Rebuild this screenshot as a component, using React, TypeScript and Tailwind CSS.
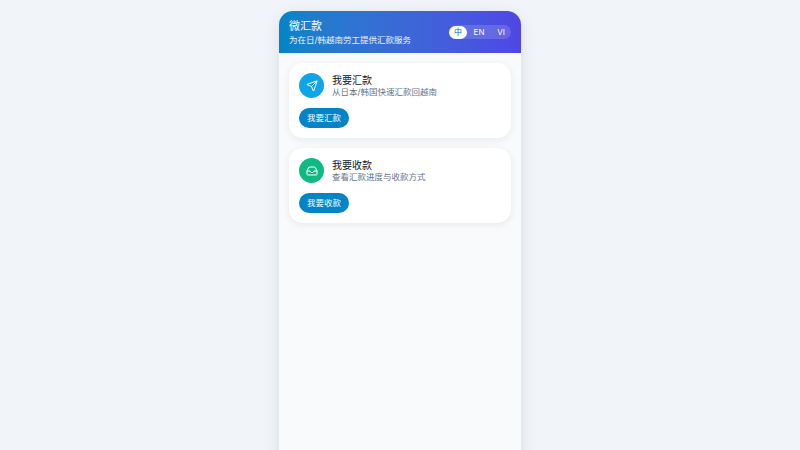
import { Send, Inbox } from "lucide-react";
import React from "react";

type ActionCardProps = {
	icon: React.ReactNode;
	iconColor: string;
	title: string;
	subtitle: string;
	button: string;
};

function ActionCard({ icon, iconColor, title, subtitle, button }: ActionCardProps) {
	return (
		<div className="rounded-[14px] bg-white p-[10px] shadow-[0_2px_8px_rgba(15,23,42,0.07)]">
			<div className="flex items-center gap-2">
				<div className={`flex h-[25px] w-[25px] items-center justify-center rounded-full text-white ${iconColor}`}>
					{icon}
				</div>
				<div>
					<div className="text-[10px] leading-[13px] text-[#0f172a]">{title}</div>
					<div className="text-[8.5px] leading-[11px] text-[#64748b]">{subtitle}</div>
				</div>
			</div>
			<button className="mt-[10px] block h-[20px] w-[50px] rounded-full bg-[#0284c7] text-[8.5px] text-white">
				{button}
			</button>
		</div>
	);
}

export default function App() {
	return (
		<div className="flex h-[450px] justify-center overflow-hidden bg-[#f1f5f9] font-['Inter','Noto_Sans_CJK_SC',sans-serif]">
			<div className="mt-[11px] h-[460px] w-[242px] overflow-hidden rounded-t-[14px] bg-[#f8fafc] shadow-[0_4px_16px_rgba(15,23,42,0.1)]">
				<div className="flex h-[42px] items-center justify-between bg-gradient-to-r from-[#0284c7] to-[#4f46e5] px-[10px] text-white">
					<div>
						<div className="text-[11px] leading-[15px]">微汇款</div>
						<div className="text-[8.5px] leading-[12px] text-white/90">为在日/韩越南劳工提供汇款服务</div>
					</div>
					<div className="flex h-[14px] items-center rounded-full bg-white/15 text-[8px]">
						<span className="flex h-[13px] w-[18px] items-center justify-center rounded-full bg-white text-[#0369a1]">中</span>
						<span className="flex w-[24px] justify-center">EN</span>
						<span className="flex w-[20px] justify-center">VI</span>
					</div>
				</div>
				<div className="flex flex-col gap-[10px] p-[10px]">
					<ActionCard
						icon={<Send size={12} />}
						iconColor="bg-[#0ea5e9]"
						title="我要汇款"
						subtitle="从日本/韩国快速汇款回越南"
						button="我要汇款"
					/>
					<ActionCard
						icon={<Inbox size={12} />}
						iconColor="bg-[#10b981]"
						title="我要收款"
						subtitle="查看汇款进度与收款方式"
						button="我要收款"
					/>
				</div>
			</div>
		</div>
	);
}
